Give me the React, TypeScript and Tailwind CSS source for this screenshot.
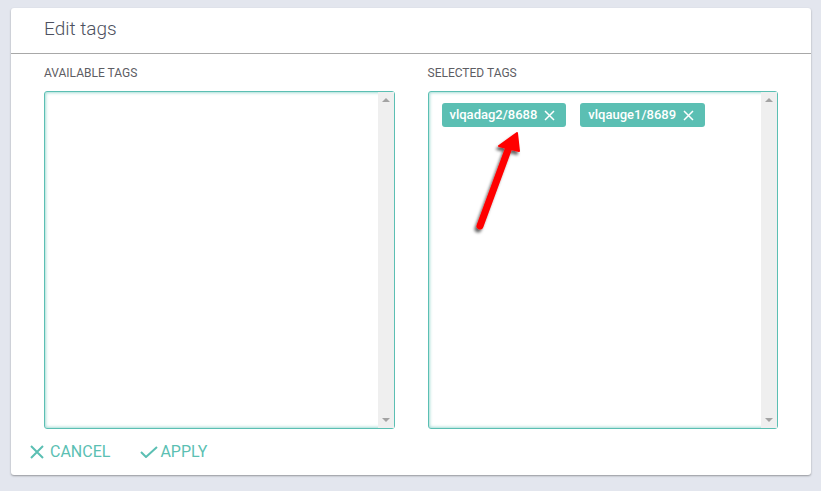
const TEAL = "#5bbfb3";

function Cross({ size, stroke }: { size: number; stroke: number }) {
  return (
    <svg width={size} height={size} viewBox={`0 0 ${size} ${size}`} fill="none" stroke="currentColor" strokeWidth={stroke}>
      <path d={`M1 1L${size - 1} ${size - 1}M${size - 1} 1L1 ${size - 1}`} />
    </svg>
  );
}

function ScrollBox({ children }: { children?: React.ReactNode }) {
  return (
    <div className="relative flex h-[338px] rounded-[3px] border border-[#5bbfb3] bg-white shadow-[inset_0_0_3px_1px_rgba(91,191,179,0.55)]">
      <div className="flex-1 px-[13px] py-[11px]">{children}</div>
      <div className="flex w-[16px] flex-col items-center justify-between bg-[#efefef] py-[6px]">
        <span className="h-0 w-0 border-x-[4px] border-b-[4px] border-x-transparent border-b-[#a3a3a3]" />
        <span className="h-0 w-0 border-x-[4px] border-t-[4px] border-x-transparent border-t-[#a3a3a3]" />
      </div>
    </div>
  );
}

function Tag({ label }: { label: string }) {
  return (
    <span className="flex h-[24px] items-center gap-[7px] rounded-[3px] bg-[#5bbfb3] pl-[8px] pr-[11px] text-[13px] font-medium text-white">
      {label}
      <Cross size={11} stroke={1.5} />
    </span>
  );
}

export default function App() {
  return (
    <div
      className="min-h-[491px] w-[821px] bg-[#e3e6ee] pl-[11px] pt-[8px]"
      style={{ fontFamily: "Roboto, 'Liberation Sans', sans-serif" }}
    >
      <div className="relative h-[467px] w-[800px] rounded-[3px] bg-white shadow-[0_1px_2px_rgba(0,0,0,0.35)]">
        <div className="flex h-[46px] items-center border-b border-[#a8a8a8] px-[33px] pb-[2px]">
          <h1 className="text-[19px] font-light text-[#4d5160]">Edit tags</h1>
        </div>

        <div className="grid grid-cols-2 gap-[33px] px-[33px] pt-[12px]">
          <div>
            <div className="mb-[11px] text-[12px] leading-[14px] text-[#5d5d63]">AVAILABLE TAGS</div>
            <ScrollBox />
          </div>
          <div>
            <div className="mb-[11px] text-[12px] leading-[14px] text-[#5d5d63]">SELECTED TAGS</div>
            <ScrollBox>
              <div className="flex gap-[14px]">
                <Tag label="vlqadag2/8688" />
                <Tag label="vlqauge1/8689" />
              </div>
            </ScrollBox>
          </div>
        </div>

        <div className="flex items-center gap-[30px] pl-[19px] pt-[11px] text-[16px]" style={{ color: TEAL }}>
          <button className="flex items-center gap-[6px]">
            <Cross size={14} stroke={2} />
            CANCEL
          </button>
          <button className="flex items-center gap-[2px]">
            <svg width="18" height="12" viewBox="0 0 18 12" fill="none" stroke="currentColor" strokeWidth="2">
              <path d="M1 6L6 11L17 1" />
            </svg>
            APPLY
          </button>
        </div>

        <svg className="absolute left-[449px] top-[112px]" width="72" height="120" viewBox="0 0 72 120">
          <defs>
            <filter id="sh" x="-50%" y="-50%" width="200%" height="200%">
              <feDropShadow dx="-2" dy="3" stdDeviation="1.6" floodColor="#000" floodOpacity="0.6" />
            </filter>
          </defs>
          <g filter="url(#sh)">
            <line x1="20" y1="106" x2="48" y2="30" stroke="#f00" strokeWidth="7" strokeLinecap="round" />
            <polygon points="57,13 39,26 59,31" fill="#f00" stroke="#f00" strokeWidth="2" strokeLinejoin="round" />
          </g>
        </svg>
      </div>
    </div>
  );
}
